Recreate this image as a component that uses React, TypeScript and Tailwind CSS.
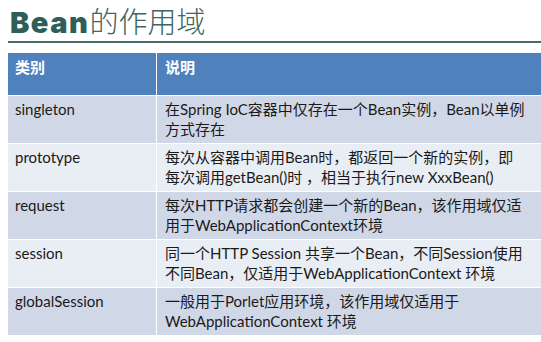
const rows: { name: string; lines: string[]; bg: string }[] = [
  {
    name: "singleton",
    lines: ["在Spring IoC容器中仅存在一个Bean实例，Bean以单例", "方式存在"],
    bg: "bg-[#d0d8e8]",
  },
  {
    name: "prototype",
    lines: ["每次从容器中调用Bean时，都返回一个新的实例，即", "每次调用getBean()时 ，相当于执行new XxxBean()"],
    bg: "bg-[#e9edf4]",
  },
  {
    name: "request",
    lines: ["每次HTTP请求都会创建一个新的Bean，该作用域仅适", "用于WebApplicationContext环境"],
    bg: "bg-[#d0d8e8]",
  },
  {
    name: "session",
    lines: ["同一个HTTP Session 共享一个Bean，不同Session使用", "不同Bean，仅适用于WebApplicationContext 环境"],
    bg: "bg-[#e9edf4]",
  },
  {
    name: "globalSession",
    lines: ["一般用于Porlet应用环境，该作用域仅适用于", "WebApplicationContext 环境"],
    bg: "bg-[#d0d8e8]",
  },
];

const cellFont = "font-['Lato','Noto_Sans_CJK_SC',sans-serif] text-[15px] leading-5 text-[#1a1a1a]";

export default function App() {
  return (
    <div className="w-[541px] h-[342px] bg-white overflow-hidden">
      <div className="pl-[10px] h-[41px] flex items-end">
        <h1 className="flex items-baseline leading-[36px] text-[#2e5e58]">
          <span className="font-['Inter',sans-serif] font-black text-[29px] tracking-[1.5px]">Bean</span>
          <span className="font-['Noto_Sans_CJK_SC',sans-serif] font-light text-[29px] text-[#3f6560]">的作用域</span>
        </h1>
      </div>
      <div className="ml-[8px] h-[2px] bg-[#4b6a64]" />
      <div className="ml-[8px] mt-[10px]">
        <div className="flex h-[43px] bg-[#4f81bd] border-b border-white">
          <div className="w-[149px] border-r border-white px-[7px] pt-[4px] font-['Noto_Sans_CJK_SC',sans-serif] font-bold text-[15px] leading-5 text-white">
            类别
          </div>
          <div className="flex-1 px-[8px] pt-[4px] font-['Noto_Sans_CJK_SC',sans-serif] font-bold text-[15px] leading-5 text-white">
            说明
          </div>
        </div>
        {rows.map((r) => (
          <div key={r.name} className={`flex h-[48px] border-b border-white ${r.bg}`}>
            <div className={`w-[149px] border-r border-white px-[7px] pt-[3px] ${cellFont}`}>{r.name}</div>
            <div className={`flex-1 px-[8px] pt-[3px] ${cellFont}`}>
              {r.lines.map((l) => (
                <div key={l} className="whitespace-nowrap">
                  {l}
                </div>
              ))}
            </div>
          </div>
        ))}
      </div>
    </div>
  );
}
